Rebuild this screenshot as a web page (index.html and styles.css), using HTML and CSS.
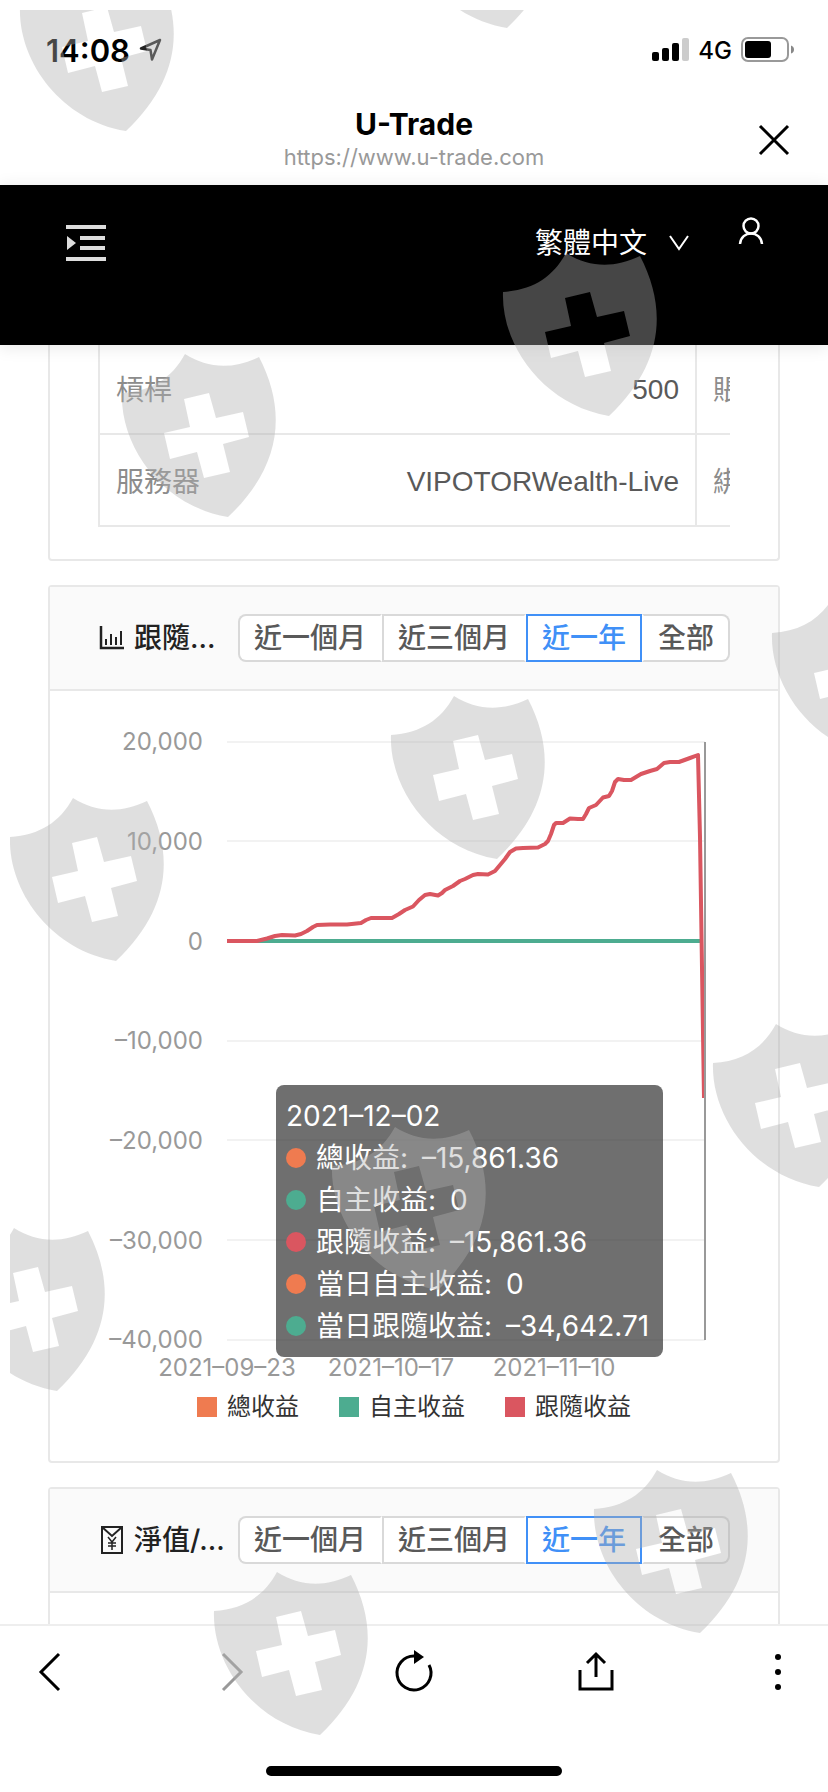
FILE: index.html
```html
<!DOCTYPE html>
<html lang="zh-Hant">

<head>
    <meta charset="UTF-8">
    <meta name="viewport" content="width=device-width">
    <title>U-Trade</title>
    <link rel="stylesheet" href="styles.css">
</head>

<body>
    <div class="status-bar">
        <span class="clock">14:08</span>
        <svg class="location" width="24" height="24" viewBox="0 0 24 24">
            <path d="M22 2 L3 10.500 L12.500 12 L14 21.500 Z" fill="none" stroke="#222" stroke-width="2.500" stroke-linejoin="round"/>
        </svg>
        <svg class="signal" width="38" height="24" viewBox="0 0 38 24">
            <rect x="0" y="14" width="7" height="9" rx="2"/>
            <rect x="10" y="10" width="7" height="13" rx="2"/>
            <rect x="20" y="5" width="7" height="18" rx="2"/>
            <rect x="30" y="0" width="7" height="23" rx="2" fill="#ccc"/>
        </svg>
        <span class="network">4G</span>
        <svg width="54" height="26" viewBox="0 0 54 26">
            <rect x="1" y="1" width="46" height="23" rx="6" fill="none" stroke="#999" stroke-width="2"/>
            <rect x="4" y="4" width="26" height="17" rx="3"/>
            <path d="M50 8.500 Q53 9.500 53 12.500 T50 16.500 Z" fill="#888"/>
        </svg>
    </div>

    <div class="title-bar">
        <div class="title">U-Trade</div>
        <div class="url">https://www.u-trade.com</div>
        <button class="close" type="button" aria-label="關閉">
            <svg width="32" height="32" viewBox="0 0 32 32">
                <path d="M2 2 L30 30 M30 2 L2 30" stroke="#000" stroke-width="3"/>
            </svg>
        </button>
    </div>

    <header class="site-header">
        <button class="menu" type="button" aria-label="選單">
            <svg width="40" height="36" viewBox="0 0 40 36" fill="#ddd">
                <rect x="0" y="0" width="40" height="4"/>
                <rect x="14" y="11" width="25" height="4"/>
                <rect x="14" y="21" width="25" height="4"/>
                <rect x="0" y="32" width="40" height="4"/>
                <path d="M1 11 L10 18 L1 25 Z"/>
            </svg>
        </button>
        <label class="language">
            <select aria-label="語言">
                <option>繁體中文</option>
            </select>
            <svg width="22" height="16" viewBox="0 0 22 16">
                <path d="M2 1 L11 14 L20 1" fill="none" stroke="#fff" stroke-width="2"/>
            </svg>
        </label>
        <button class="user" type="button" aria-label="帳戶">
            <svg width="26" height="28" viewBox="0 0 26 28" fill="none" stroke="#fff" stroke-width="2.500">
                <circle cx="13" cy="9" r="7.500"/>
                <path d="M2 27 C3 13 23 13 24 27"/>
            </svg>
        </button>
    </header>

    <main>
        <section class="card card-account">
            <div class="table-wrap">
                <table>
                    <tr>
                        <th class="label">槓桿</th>
                        <td>500</td>
                        <th>賬戶</th>
                        <td></td>
                    </tr>
                    <tr>
                        <th class="label">服務器</th>
                        <td>VIPOTORWealth-Live</td>
                        <th>綁定</th>
                        <td></td>
                    </tr>
                </table>
            </div>
        </section>

        <section class="card">
            <div class="card-head">
                <svg class="card-icon" width="26" height="28" viewBox="0 0 26 28" fill="none" stroke="#222" stroke-width="2">
                    <path d="M3 2 V24 H26" stroke-width="2.500"/>
                    <path d="M8 15 V21 M13 10 V21 M18 13 V21 M23 7 V21"/>
                </svg>
                <h2>跟隨...</h2>
                <div class="range">
                    <button type="button">近一個月</button>
                    <button type="button">近三個月</button>
                    <button type="button" class="active">近一年</button>
                    <button type="button">全部</button>
                </div>
            </div>
            <div class="chart">
                <svg class="plot" viewBox="0 -1 728 698">
                    <g class="grid">
                        <path d="M177 50 H655 M177 149 H655 M177 349 H655 M177 448 H655 M177 548 H655 M177 648 H655"/>
                    </g>
                    <g class="axis-y">
                        <text x="153" y="58">20,000</text>
                        <text x="153" y="158">10,000</text>
                        <text x="153" y="258">0</text>
                        <text x="153" y="357">–10,000</text>
                        <text x="153" y="457">–20,000</text>
                        <text x="153" y="557">–30,000</text>
                        <text x="153" y="656">–40,000</text>
                    </g>
                    <g class="axis-x">
                        <text x="177" y="684">2021–09–23</text>
                        <text x="341" y="684">2021–10–17</text>
                        <text x="504" y="684">2021–11–10</text>
                    </g>
                    <path class="line-self" d="M177 249 H653"/>
                    <path class="line-follow" d="M177 249 L207 249 L217 246.500 L225 244 L232 243 L245 243.500 L251 242 L257 239 L263 235 L267 233 L280 232.500 L297 232.500 L311 231 L316 228 L321 226 L342 226 L349 222 L355 218 L363 214.500 L369 208 L375 203 L380 202 L388 203.500 L392 201 L395 198 L403 194 L410 189 L415 187 L423 183 L428 182 L438 182.500 L445 179 L455 167 L460 160 L466 156.500 L473 156 L488 155.500 L495 152 L498 149 L501 142 L504 133 L506 131 L513 131 L520 126.500 L528 127 L533 127 L536 122 L539 116 L546 113 L553 105.500 L559 104 L562 99 L565 90 L568 87 L574 88 L581 88 L591 82 L600 79 L607 77 L614 71 L620 70 L629 70 L640 66 L648 63 L650 145 L654 406" />
                    <path class="pointer" d="M655 50 V648"/>
                </svg>
                <div class="tooltip">
                    <div>2021–12–02</div>
                    <div><i class="dot orange"></i>總收益: <span>–15,861.36</span></div>
                    <div><i class="dot green"></i>自主收益: <span>0</span></div>
                    <div><i class="dot red"></i>跟隨收益: <span>–15,861.36</span></div>
                    <div><i class="dot orange"></i>當日自主收益: <span>0</span></div>
                    <div><i class="dot green"></i>當日跟隨收益: <span>–34,642.71</span></div>
                </div>
                <div class="legend">
                    <span><i class="orange"></i>總收益</span>
                    <span><i class="green"></i>自主收益</span>
                    <span><i class="red"></i>跟隨收益</span>
                </div>
            </div>
        </section>

        <section class="card card-last">
            <div class="card-head">
                <svg class="card-icon" width="26" height="28" viewBox="0 0 26 28" fill="none" stroke="#222" stroke-width="2">
                    <rect x="4" y="1" width="20" height="26"/>
                    <path d="M4 1 L14 10 L24 1"/>
                    <path d="M10 11 L14 16 L18 11 M14 16 V24 M10 17 H18 M10 20 H18" stroke-width="1.500"/>
                </svg>
                <h2>淨值/...</h2>
                <div class="range">
                    <button type="button">近一個月</button>
                    <button type="button">近三個月</button>
                    <button type="button" class="active">近一年</button>
                    <button type="button">全部</button>
                </div>
            </div>
        </section>
    </main>

    <nav class="toolbar">
        <div class="tools">
            <button type="button" aria-label="上一頁">
                <svg width="44" height="44" viewBox="0 0 44 44"><path d="M31 4 L13 22 L31 40"/></svg>
            </button>
            <button type="button" aria-label="下一頁" disabled>
                <svg width="44" height="44" viewBox="0 0 44 44"><path d="M13 4 L31 22 L13 40" stroke="#999"/></svg>
            </button>
            <button type="button" aria-label="重新整理">
                <svg width="44" height="44" viewBox="0 0 44 44">
                    <path d="M37 15 A17 17 0 1 1 22 6"/>
                    <path d="M22 0 L32 7 L22 14 Z" fill="#000" stroke="none"/>
                </svg>
            </button>
            <button type="button" aria-label="分享">
                <svg width="44" height="44" viewBox="0 0 44 44">
                    <path d="M6 20 V39 H38 V20 M22 27 V4 M13 13 L22 4 L31 13"/>
                </svg>
            </button>
            <button type="button" aria-label="更多">
                <svg width="44" height="44" viewBox="0 0 44 44">
                    <g fill="#000" stroke="none">
                        <circle cx="22" cy="7" r="3"/>
                        <circle cx="22" cy="22" r="3"/>
                        <circle cx="22" cy="37" r="3"/>
                    </g>
                </svg>
            </button>
        </div>
        <div class="home-indicator"></div>
    </nav>

    <!-- shield watermark over the whole screen -->
    <svg class="watermark" aria-hidden="true">
        <defs>
            <path id="shield" fill-rule="evenodd" d="M10 47 C40 45 60 32 73 8 C95 22 120 24 147 11 C175 65 170 120 116 171 C50 160 8 100 10 47 Z
                M72 53 L97 47 L104 72 L131 66 L137 91 L111 98 L118 126 L92 132 L85 106 L58 113 L52 87 L78 81 Z"/>
        </defs>
        <use href="#shield" x="0" y="-50"/>
        <use href="#shield" x="381" y="-153"/>
        <use href="#shield" x="483" y="235"/>
        <use href="#shield" x="102" y="336"/>
        <use href="#shield" x="752" y="576"/>
        <use href="#shield" x="371" y="678"/>
        <use href="#shield" x="-10" y="780"/>
        <use href="#shield" x="693" y="1006"/>
        <use href="#shield" x="312" y="1109"/>
        <use href="#shield" x="-69" y="1210"/>
        <use href="#shield" x="574" y="1452"/>
        <use href="#shield" x="194" y="1554"/>
    </svg>
</body>

</html>
```
FILE: styles.css
```css
* {
    box-sizing: border-box;
}

body {
    margin: 0;
    height: 100vh;
    display: flex;
    flex-direction: column;
    overflow: hidden;
    position: relative;
    background: #fff;
    color: #000;
    font-family: Inter, "Noto Sans CJK TC", sans-serif;
    font-size: 28px;
}

button {
    border: 0;
    padding: 0;
    background: none;
    font: inherit;
    color: inherit;
}

svg {
    display: block;
}

/* Phone status bar */
.status-bar {
    display: flex;
    align-items: center;
    height: 100px;
    padding: 0 33px 0 46px;
    flex: none;
}

.clock {
    font-size: 31px;
    font-weight: 600;
}

.location {
    margin-left: 8px;
}

.signal {
    margin-left: auto;
}

.network {
    font-size: 24px;
    font-weight: 500;
    margin: 0 9px 0 8px;
}

/* In-app browser title */
.title-bar {
    position: relative;
    height: 85px;
    flex: none;
    text-align: center;
}

.title {
    font-size: 30px;
    font-weight: 700;
    line-height: 36px;
    padding-top: 6px;
}

.url {
    font-size: 22px;
    line-height: 30px;
    color: #999;
}

.close {
    position: absolute;
    right: 38px;
    top: 24px;
}

/* Black site header */
.site-header {
    display: flex;
    align-items: flex-start;
    height: 160px;
    padding: 32px 64px 0 66px;
    flex: none;
    position: relative;
    z-index: 1;
    background: #000;
    color: #fff;
    box-shadow: 0 2px 16px rgba(0, 0, 0, 0.1);
}

.menu {
    margin-top: 8px;
}

.language {
    display: flex;
    align-items: center;
    gap: 20px;
    height: 52px;
    margin-left: auto;
}

.language select {
    appearance: none;
    border: 0;
    padding: 0;
    background: none;
    color: #fff;
    font: inherit;
    line-height: 40px;
}

.user {
    margin-left: 48px;
}

main {
    flex: 1;
    min-height: 0;
    overflow: hidden;
    padding: 0 48px;
}

/* Cards */
.card {
    border: 2px solid #e8e8e8;
    border-radius: 4px;
    margin-bottom: 24px;
}

.card-account {
    border-top: 0;
    border-radius: 0 0 4px 4px;
    padding: 0 48px 32px;
    margin-top: -2px;
}

/* the second pair of columns runs off the right side */
.table-wrap {
    overflow: hidden;
}

table {
    border-collapse: separate;
    border-spacing: 0;
    table-layout: fixed;
    width: 1196px;
    border-left: 2px solid #e8e8e8;
    font-family: "Liberation Sans", "Noto Sans CJK TC", sans-serif;
}

th,
td {
    height: 92px;
    padding: 0 16px;
    border-bottom: 2px solid #e8e8e8;
    white-space: nowrap;
}

th {
    width: 200px;
    text-align: left;
    font-weight: 400;
    color: #8c8c8c;
}

td {
    padding-top: 4px;
    text-align: right;
    color: #595959;
    border-right: 2px solid #e8e8e8;
}

.card-head {
    display: flex;
    align-items: center;
    height: 104px;
    padding: 0 48px;
    background: #fafafa;
    border-bottom: 2px solid #e8e8e8;
}

.card-icon {
    flex: none;
}

h2 {
    margin: 0 0 0 10px;
    font-size: 28px;
    font-weight: 500;
    line-height: 40px;
    color: #222;
    white-space: nowrap;
}

.range {
    display: flex;
    margin-left: auto;
    flex: none;
}

.range button {
    height: 48px;
    padding: 0 14px;
    border: 2px solid #d9d9d9;
    border-right-color: transparent;
    background: #fff;
    color: #595959;
    font-weight: 500;
    line-height: 40px;
    white-space: nowrap;
}

.range button:first-child {
    border-radius: 8px 0 0 8px;
}

.range button:last-child {
    border-color: #d9d9d9;
    border-left-color: transparent;
    border-radius: 0 8px 8px 0;
}

.range button.active {
    border-color: #4090f7;
    color: #4090f7;
}

.card-last {
    height: 240px;
}

/* Chart */
.chart {
    position: relative;
    padding-bottom: 36px;
}

.plot {
    width: 100%;
}

.plot text {
    font-size: 24px;
    fill: #999;
}

.grid path {
    stroke: #f2f2f2;
    stroke-width: 2;
}

.axis-y {
    text-anchor: end;
}

.axis-x {
    text-anchor: middle;
}

.line-self,
.line-follow {
    fill: none;
    stroke-width: 4;
    stroke-linejoin: round;
}

.line-self {
    stroke: #4dac90;
}

.line-follow {
    stroke: #da5660;
}

.pointer {
    stroke: #999;
    stroke-width: 2;
}

.orange {
    background: #ef7b50;
}

.green {
    background: #4dac90;
}

.red {
    background: #da5660;
}

.tooltip {
    position: absolute;
    left: 226px;
    top: 394px;
    min-width: 387px;
    padding: 10px;
    border-radius: 8px;
    background: rgba(50, 50, 50, 0.7);
    color: #fff;
    line-height: 42px;
    white-space: nowrap;
}

.tooltip div {
    height: 42px;
}

.tooltip span {
    margin-left: 6px;
}

.dot {
    display: inline-block;
    width: 20px;
    height: 20px;
    margin-right: 10px;
    border-radius: 50%;
}

.legend {
    display: flex;
    justify-content: center;
    gap: 40px;
    font-size: 24px;
    line-height: 36px;
    color: #333;
}

.legend span {
    display: flex;
    align-items: center;
    gap: 10px;
}

.legend i {
    width: 20px;
    height: 20px;
}

/* Browser toolbar */
.toolbar {
    flex: none;
    height: 168px;
    padding-bottom: 16px;
    display: flex;
    flex-direction: column;
    justify-content: space-between;
    background: #fff;
    border-top: 2px solid #eee;
}

.tools {
    display: flex;
    justify-content: space-between;
    padding: 24px 28px 0;
}

.tools svg {
    fill: none;
    stroke: #000;
    stroke-width: 3;
}

.home-indicator {
    width: 296px;
    height: 10px;
    margin: 0 auto;
    border-radius: 5px;
    background: #000;
}

.watermark {
    position: absolute;
    left: 10px;
    top: 10px;
    width: calc(100% - 10px);
    height: calc(100% - 10px);
    z-index: 2;
    overflow: hidden;
    pointer-events: none;
    fill: #aeaeae;
    fill-opacity: 0.4;
}
```
